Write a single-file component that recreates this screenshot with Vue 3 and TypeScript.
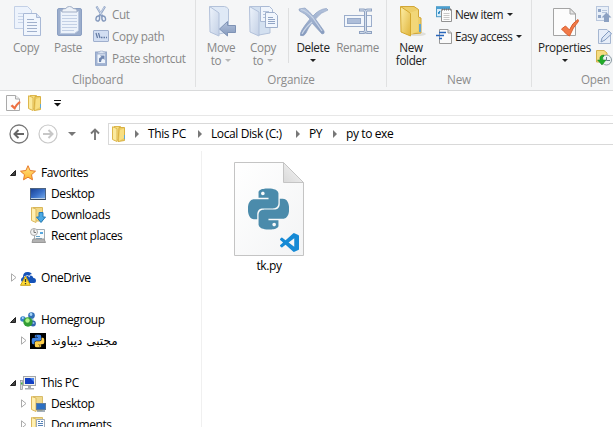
<script setup lang="ts">
interface Crumb { label: string; width: number }
interface TreeItem {
  label: string
  icon: string
  level: number
  state?: 'open' | 'closed'
  spacer?: boolean
  rtl?: boolean
}

const crumbs: Crumb[] = [
  { label: 'This PC', width: 63 },
  { label: 'Local Disk (C:)', width: 98 },
  { label: 'PY', width: 37 },
  { label: 'py to exe', width: 60 },
]

const tree: TreeItem[] = [
  { label: 'Favorites', icon: 'star', level: 0, state: 'open' },
  { label: 'Desktop', icon: 'desktop', level: 1 },
  { label: 'Downloads', icon: 'downloads', level: 1 },
  { label: 'Recent places', icon: 'recent', level: 1 },
  { label: 'OneDrive', icon: 'onedrive', level: 0, state: 'closed', spacer: true },
  { label: 'Homegroup', icon: 'homegroup', level: 0, state: 'open', spacer: true },
  { label: 'مجتبی دیباوند', icon: 'pyuser', level: 1, state: 'closed', rtl: true },
  { label: 'This PC', icon: 'thispc', level: 0, state: 'open', spacer: true },
  { label: 'Desktop', icon: 'folder-desktop', level: 1, state: 'closed' },
  { label: 'Documents', icon: 'folder-docs', level: 1, state: 'closed' },
]
</script>

<template>
  <div class="explorer">
    <svg class="sprite" aria-hidden="true">
      <defs>
        <linearGradient id="gBlue" x1="0" y1="0" x2="1" y2="1"><stop offset="0" stop-color="#eef4fc" /><stop offset="1" stop-color="#c3d0e5" /></linearGradient>
        <linearGradient id="gSteel" x1="0" y1="0" x2="0" y2="1"><stop offset="0" stop-color="#b3c2dc" /><stop offset="1" stop-color="#8499bc" /></linearGradient>
        <linearGradient id="gGold" x1="0" y1="0" x2="1" y2="1"><stop offset="0" stop-color="#fff0a8" /><stop offset="1" stop-color="#dfb43c" /></linearGradient>
        <linearGradient id="gStar" x1="0" y1="0" x2="0" y2="1"><stop offset="0" stop-color="#ffe487" /><stop offset="1" stop-color="#ffb52e" /></linearGradient>
        <linearGradient id="gScreen" x1="0" y1="0" x2="1" y2="1"><stop offset="0" stop-color="#183e91" /><stop offset=".5" stop-color="#396fc7" /><stop offset="1" stop-color="#7fb2ee" /></linearGradient>
        <linearGradient id="gPage" x1="0" y1="0" x2="1" y2="1"><stop offset="0" stop-color="#fff" /><stop offset="1" stop-color="#f3f4f5" /></linearGradient>
        <linearGradient id="gFold" x1="0" y1="1" x2="1" y2="0"><stop offset="0" stop-color="#d9d9d9" /><stop offset="1" stop-color="#f7f7f7" /></linearGradient>
      </defs>
      <symbol id="copy" viewBox="0 0 32 32">
        <path d="M4.500 1.500H17.500L21.500 5.500V23.500H4.500Z" fill="#edf3fc" stroke="#c3d0e6" />
        <path d="M8 8.500H13M8 11.500H13M8 14.500H13M8 17.500H13" stroke="#c9d5e9" />
        <path d="M13.500 8.500H26.500L30.500 12.500V30.500H13.500Z" fill="#f1f6fd" stroke="#a9b9d6" />
        <path d="M26.500 8.500V12.500H30.500" fill="#d5e0f1" stroke="#a9b9d6" />
        <path d="M17 14.500H24M17 17.500H27M17 20.500H27M17 23.500H27M17 26.500H27" stroke="#a0b0cc" />
      </symbol>
      <symbol id="paste" viewBox="0 0 32 32">
        <rect x="5.500" y="3.500" width="24" height="27" rx="1.500" fill="#9badcc" stroke="#8b9fc2" />
        <path d="M8.500 6.500H26.500V25.500L22.500 28.500H8.500Z" fill="#edf3fb" stroke="#bac8df" />
        <path d="M10 10.500H25M10 13.500H25M10 16.500H25M10 19.500H25M10 22.500H25M10 25.500H22" stroke="#c3d0e5" />
        <path d="M10 7V5Q11 3.500 14 3.500Q14.500 1.500 17.500 1.500T21 3.500Q24 3.500 25 5V7Z" fill="#eef2f8" stroke="#a3b0c7" />
      </symbol>
      <symbol id="cut" viewBox="0 0 16 16">
        <path d="M3.500 .5L9.800 11M12 .5L5.700 11" stroke="#93a6c6" stroke-width="2.200" fill="none" />
        <path d="M4 1L9 9M11.500 1L7 8" stroke="#dbe4f2" stroke-width=".7" />
        <path d="M6.500 10Q3.500 9.500 3 12.500T5.500 15Q7 14 6.500 10ZM9 10Q12 9.500 12.500 12.500T10 15Q8.500 14 9 10Z" fill="#edf2fa" stroke="#8297bb" stroke-width="1.400" />
      </symbol>
      <symbol id="path" viewBox="0 0 16 16">
        <rect x=".5" y="2.500" width="15" height="11" rx=".5" fill="#d2def2" stroke="#9fafcd" />
        <path d="M3 5L4.500 10M5.500 5L7 10" stroke="#6078a2" stroke-width="1.200" />
        <path d="M8 9.500H9.500M10.500 9.500H12M13 9.500H14" stroke="#6078a2" stroke-width="1.300" />
      </symbol>
      <symbol id="shortcut" viewBox="0 0 16 16">
        <rect x="2.600" y="2" width="10.800" height="13.300" fill="#a6b7d5" stroke="#8ea2c6" />
        <rect x="4.500" y="4.500" width="7.500" height="8.500" fill="#edf3fb" />
        <path d="M5 3.500V2H7V1H10V2H12V3.500Z" fill="#dce5f2" stroke="#a4b4cf" stroke-width=".6" />
        <path d="M6 12V8.500Q7 7 8.500 7L7 5.500H11.500V10L10 8.500Q8 9 8 12Z" fill="#6f86b0" />
      </symbol>
      <symbol id="move" viewBox="0 0 32 32">
        <path d="M5 1.500H19.500Q22 2 23.500 4V27L14 29Z" fill="#dfe9f6" stroke="#b3c2da" />
        <path d="M4.500 1.500L12 6.500L14 8V31L5 27Z" fill="url(#gBlue)" stroke="#b2c1da" />
        <path d="M14.500 24L22.500 16.500V20.500H30.500V27.500H22.500V31Z" fill="url(#gSteel)" stroke="#7f93b5" />
      </symbol>
      <symbol id="copyto" viewBox="0 0 32 32">
        <path d="M3 1.500H17L23 5V28L12 30Z" fill="#d3e0f0" stroke="#b3c2da" />
        <path d="M2.500 1.500L12 7V31L3 27Z" fill="url(#gBlue)" stroke="#b2c1da" />
        <path d="M13.500 1.500H22.500L25.500 4.500V16.500H13.500Z" fill="#f0f5fc" stroke="#aabad5" />
        <path d="M16 6.500H22M16 9.500H22M16 12.500H22" stroke="#b4c3dc" />
        <path d="M18.500 7.500H27.500L30.500 10.500V22.500H18.500Z" fill="#f1f6fd" stroke="#9eafcb" />
        <path d="M21 12.500H26M21 14.500H28M21 16.500H28M21 18.500H28" stroke="#92a5c5" />
      </symbol>
      <symbol id="delete" viewBox="0 0 32 32">
        <path d="M2 4L8 3Q12 6 16 11Q22 4 29.500 3.500L31 5Q24 7 18.500 14L27 26Q28 29 25 29L15 18Q11 23 9 28Q7 32 3.500 30.500Q2 27 13 14Q8 8 2.500 6Z" fill="url(#gSteel)" stroke="#8b9fc1" stroke-width=".7" />
        <path d="M4 4.500Q10 6 16 13L25 26M15 17Q8 23 5 29" fill="none" stroke="#c8d4e6" stroke-width="1.200" />
      </symbol>
      <symbol id="rename" viewBox="0 0 32 32">
        <rect x="2.500" y="10.500" width="27" height="11" fill="#f2f6fb" stroke="#9badcb" />
        <rect x="5.500" y="13.500" width="13" height="5" fill="#aebed9" stroke="#96a9c9" />
        <path d="M17 5H21.500Q23.500 5 23.500 7V25Q23.500 27.500 21.500 27.500H17M30 5H25.500Q23.500 5 23.500 7V25Q23.500 27.500 25.500 27.500H30" fill="none" stroke="#8fa2c1" stroke-width="3" />
        <path d="M18 5H21.500Q23.500 5 23.500 7V25Q23.500 27.500 21.500 27.500H18M29 5H25.500Q23.500 5 23.500 7M23.500 25Q23.500 27.500 25.500 27.500H29" fill="none" stroke="#d4deec" />
      </symbol>
      <symbol id="goldfolder" viewBox="0 0 32 32">
        <ellipse cx="22" cy="29" rx="9" ry="2" fill="#dfdfdb" />
        <path d="M6 1.500H19L23.500 4.500V12L26 13V28L16 29Z" fill="#edce69" stroke="#d1a637" />
        <path d="M14 8L23 5V26L15 30Z" fill="#f2d778" />
        <path d="M5.500 1.500L13 6.500L15.500 8.500V31L6 27Z" fill="url(#gGold)" stroke="#d4a82f" />
        <rect x="24" y="19" width="2" height="8" fill="#60a5ce" />
      </symbol>
      <symbol id="newitem" viewBox="0 0 16 16">
        <rect x=".5" y=".7" width="13" height="10" fill="#d7ecfa" stroke="#4b9cc7" />
        <path d="M1 1H13V3H1Z" fill="#4ba0d3" /><path d="M2 7L4 5L3 8Z" stroke="#308bc5" fill="none" />
        <path d="M5.500 3.500H15.500V15.500H5.500Z" fill="#fcfcfc" stroke="#929292" />
        <path d="M6 3.500H15" stroke="#777" stroke-dasharray="1 1" stroke-width="2" />
        <path d="M7.500 7.500H13.500M7.500 9.500H13.500M7.500 11.500H13.500M7.500 13.500H13.500" stroke="#c8c8c8" />
      </symbol>
      <symbol id="access" viewBox="0 0 16 16">
        <path d="M3.500 1.500H12L15.500 5V15.500H3.500Z" fill="#fafafa" stroke="#999" />
        <path d="M12 1.500V5H15.500" fill="#ddd" stroke="#999" />
        <path d="M3 4.500H10M0 7.500H8M3 10.500H6" stroke="#2866bb" stroke-width="1.300" />
      </symbol>
      <symbol id="properties" viewBox="0 0 32 32">
        <path d="M4.500 3.500H21L26.500 9V30.500H4.500Z" fill="#fcfcfc" stroke="#a4a4a4" />
        <path d="M21 3.500V9H26.500Z" fill="#e6e6e6" stroke="#a4a4a4" />
        <path d="M12.500 24L16.500 21L20.500 25Q23 18 29 14.500Q30 15 29 17Q24 22 20.500 31Q18 30 12.500 24Z" fill="#f17a48" stroke="#d95d2d" />
      </symbol>
      <symbol id="open" viewBox="0 0 16 16">
        <rect x=".5" y=".5" width="12" height="14" fill="#e8eff8" stroke="#b9c7dd" />
        <path d="M2 3H5V6H2ZM2 9H5V12H2Z" fill="#91a6c7" /><path d="M6 4.500H11M6 6.500H11" stroke="#b6c5dc" />
        <path d="M10.500 6.500L15.500 11.500H13V16H8V11.500H5.500Z" fill="#8ca1c2" />
      </symbol>
      <symbol id="edit" viewBox="0 0 16 16">
        <path d="M2.500 1.500H11L14.500 5V15.500H2.500Z" fill="#e7eef9" stroke="#a5b6d1" />
        <path d="M5 14L6 10L13 3L15.500 6L9 12Z" fill="#dce6f5" stroke="#829bc0" />
      </symbol>
      <symbol id="history" viewBox="0 0 16 16">
        <path d="M.5 .5H8L11 3V12H.5Z" fill="#f5dc82" stroke="#d4b14c" />
        <circle cx="10.500" cy="10" r="5" fill="#eef3f5" stroke="#8c9ba3" />
        <path d="M10.500 7V10.500H14" fill="none" stroke="#657b8a" />
        <path d="M8 5Q3 5 4 10H1.500L6 15L10 10H7Q6 7 8 6Z" fill="#20ad28" stroke="#128118" stroke-width=".5" />
      </symbol>
      <symbol id="smallprops" viewBox="0 0 16 16">
        <path d="M1.500 .5H10.500L14.500 4V15.500H1.500Z" fill="#fcfcfc" stroke="#aaa" />
        <path d="M10.500 .5V4H14.500" fill="#eee" stroke="#aaa" />
        <path d="M5.500 11L7.500 9.500L9.500 11.500Q12 7 15 6L15.500 8Q12 10 10 15Z" fill="#ed7041" />
      </symbol>
      <symbol id="folder" viewBox="0 0 16 16">
        <path d="M3 .5H9.500V14H3Z" fill="#f7df83" stroke="#ddb74d" />
        <path d="M8 1.500H13.500V14.500L7 15.500Z" fill="#eccb65" stroke="#d9b142" />
        <path d="M1.500 .8L6 2.500V15.500L1.500 13.500Z" fill="#fbea9e" stroke="#ddb74d" />
        <path d="M9 4L13 2.500V12L8 15Z" fill="#f8df82" /><path d="M13.500 9V13" stroke="#62a8d1" />
      </symbol>
      <symbol id="star" viewBox="0 0 16 16"><path d="M8 .7L10.100 5.500L15.500 6.200L11.500 9.700L12.500 14.800L8 12.200L3.500 14.800L4.500 9.700L.5 6.200L5.900 5.500Z" fill="url(#gStar)" stroke="#e7792b" /></symbol>
      <symbol id="desktop" viewBox="0 0 16 16"><rect x=".5" y="2.500" width="15" height="11" fill="url(#gScreen)" stroke="#4e6481" /><path d="M1 12.500H15" stroke="#bcd0e5" /><path d="M.5 13.500H15.500" stroke="#34465d" /></symbol>
      <symbol id="downloads" viewBox="0 0 16 16">
        <path d="M3 .5H12.500V14H3Z" fill="#f1d784" stroke="#d9b75a" /><path d="M1.500 .5L6 2V15.500L1.500 13.500Z" fill="#fff0b2" stroke="#dcb85d" />
        <path d="M9 5.500H13V10H15.500L11 15.500L6.500 10H9Z" fill="#4ca9e3" stroke="#247bb8" />
      </symbol>
      <symbol id="recent" viewBox="0 0 16 16">
        <path d="M4.500 1.500H14.500V12H4.500Z" fill="#f7fbfd" stroke="#a3acb2" /><path d="M10 4H13V6H10Z" fill="#57a7df" /><path d="M6 8.500H10M6 10.500H12" stroke="#66a2c7" />
        <circle cx="4" cy="4" r="3.500" fill="#f2f2f2" stroke="#aaa" /><path d="M4 1.500V4.500H6" fill="none" stroke="#777" />
        <path d="M3 11H14L15.500 14.500H2Z" fill="#b3b3b3" stroke="#999" />
      </symbol>
      <symbol id="onedrive" viewBox="0 0 16 16">
        <path d="M2 12Q-.5 9 3 7Q3 2 7.500 2Q10 1.500 12 4Q10 4 9 6Q12 4.500 13.500 8Q16 8 16 11Q16 13 14 13H7Z" fill="#1552b7" />
        <path d="M4 7Q8 4 10 7" fill="none" stroke="#fff" stroke-width=".9" />
        <path d="M5.500 6.300L10.500 15.300H.5Z" fill="#ffdc35" stroke="#c9a218" /><path d="M5.500 9V12M5.500 13V14.200" stroke="#333" stroke-width="1.300" />
      </symbol>
      <symbol id="homegroup" viewBox="0 0 16 16">
        <path d="M3 7L8 10L12 4L13 12L7 13Z" fill="none" stroke="#9cc6dc" stroke-width="2" />
        <circle cx="3" cy="7" r="2.800" fill="#3683c8" /><circle cx="11.500" cy="3.500" r="3.300" fill="#326fb8" /><circle cx="13" cy="11.500" r="2.900" fill="#3267ae" /><circle cx="8" cy="10" r="4.700" fill="#329d35" />
        <circle cx="7.500" cy="8.500" r="2.200" fill="#adf286" /><circle cx="11" cy="2.500" r="1.400" fill="#a9d8f7" /><circle cx="2.800" cy="6" r="1" fill="#b2dcfa" /><circle cx="13.500" cy="11" r="1" fill="#8dbde9" />
      </symbol>
      <symbol id="pytop" viewBox="0 0 24 24"><path d="M14.250.180l.9.2.73.26.59.3.45.32.34.34.25.34.16.33.1.3.04.26.02.2-.01.13V8.500l-.05.63-.13.55-.21.46-.26.38-.3.31-.33.25-.35.19-.35.14-.33.1-.3.07-.26.04-.21.02H8.770l-.69.05-.59.14-.5.22-.41.27-.33.32-.27.35-.2.36-.15.37-.1.35-.07.32-.04.27-.02.21v3.060H3.170l-.21-.03-.28-.07-.32-.12-.35-.18-.36-.26-.36-.36-.35-.46-.32-.59-.28-.73-.21-.88-.14-1.050-.05-1.230.06-1.220.16-1.040.24-.87.32-.71.36-.57.4-.44.42-.33.42-.24.4-.16.36-.1.32-.05.24-.01h.16l.06.01h8.160v-.83H6.180l-.01-2.750-.02-.37.05-.34.11-.31.17-.28.25-.26.31-.23.38-.2.44-.18.51-.15.58-.12.64-.1.71-.06.77-.04.84-.02 1.270.05zm-6.300 1.980l-.23.33-.08.41.08.41.23.34.33.22.41.09.41-.09.33-.22.23-.34.08-.41-.08-.41-.23-.33-.33-.22-.41-.09-.41.09z" /></symbol>
      <symbol id="pybottom" viewBox="0 0 24 24"><path d="M21.040 6.110l.28.06.32.12.35.18.36.27.36.35.35.47.32.59.28.73.21.88.14 1.040.05 1.230-.06 1.230-.16 1.040-.24.86-.32.71-.36.57-.4.45-.42.33-.42.24-.4.16-.36.09-.32.05-.24.02-.16-.01h-8.220v.82h5.840l.01 2.760.02.36-.05.34-.11.31-.17.29-.25.25-.31.24-.38.2-.44.17-.51.15-.58.13-.64.09-.71.07-.77.04-.84.01-1.270-.04-1.070-.14-.9-.2-.73-.25-.59-.3-.45-.33-.34-.34-.25-.34-.16-.33-.1-.3-.04-.25-.02-.2.01-.13v-5.340l.05-.64.13-.54.21-.46.26-.38.3-.32.33-.24.35-.2.35-.14.33-.1.3-.06.26-.04.21-.02.13-.01h5.840l.69-.05.59-.14.5-.21.41-.28.33-.32.27-.35.2-.36.15-.36.1-.35.07-.32.04-.28.02-.21V6.070h2.090l.14.01zm-6.470 14.250l-.23.33-.08.41.08.41.23.33.33.23.41.08.41-.08.33-.23.23-.33.08-.41-.08-.41-.23-.33-.33-.23-.41-.08-.41.08z" /></symbol>
      <symbol id="pyuser" viewBox="0 0 16 16"><rect width="16" height="16" fill="#000" /><use href="#pytop" x="1.500" y="1.500" width="13" height="13" fill="#3f84e4" /><use href="#pybottom" x="1.500" y="1.500" width="13" height="13" fill="#ffd04b" /></symbol>
      <symbol id="thispc" viewBox="0 0 16 16">
        <rect x="3.500" y="1.500" width="12" height="9" fill="#f1f1eb" stroke="#a3a6a9" /><rect x="5" y="3" width="9" height="6" fill="#123fc3" /><path d="M10 3H14V7Z" fill="#4d86ed" />
        <path d="M8 11H11V13H14V14.500H5V13H8Z" fill="#a6abb0" /><rect x=".5" y="5.500" width="2" height="9" fill="#ddd" stroke="#8a9296" stroke-width=".7" /><path d="M1 8.500H2.500" stroke="#43b543" stroke-width="2" />
      </symbol>
      <symbol id="folder-desktop" viewBox="0 0 16 16">
        <path d="M3 .5H12.500V14H3Z" fill="#efd98c" stroke="#d9bc69" /><path d="M1.500 .5L6 2V15.500L1.500 13.500Z" fill="#fff0b2" stroke="#dcb85d" />
        <rect x="6.500" y="7.500" width="9" height="6" fill="#2d70c2" stroke="#607d9d" /><path d="M7 15H15" stroke="#486077" />
      </symbol>
      <symbol id="folder-docs" viewBox="0 0 16 16">
        <path d="M3 .5H12.500V14H3Z" fill="#efd98c" stroke="#d9bc69" /><path d="M1.500 .5L6 2V15.500L1.500 13.500Z" fill="#fff0b2" stroke="#dcb85d" />
        <path d="M6.500 2.500H14.500V13.500H6.500Z" fill="#fcfdff" stroke="#9eabb8" /><path d="M8 4.500H10M11 4.500H13M8 6.500H13M8 8.500H13" stroke="#5682b5" />
      </symbol>
      <symbol id="vscode" viewBox="0 0 24 24"><path d="M23.150 2.587L18.210.210a1.494 1.494 0 0 0-1.705.290l-9.460 8.630-4.120-3.128a.999.999 0 0 0-1.276.057L.327 7.261A1 1 0 0 0 .326 8.740L3.899 12 .326 15.260a1 1 0 0 0 .001 1.479L1.650 17.940a.999.999 0 0 0 1.276.057l4.120-3.128 9.460 8.630a1.492 1.492 0 0 0 1.704.290l4.942-2.377A1.500 1.500 0 0 0 24 20.060V3.939a1.500 1.500 0 0 0-.85-1.352zm-5.146 14.861L10.826 12l7.178-5.448v10.896z" /></symbol>
    </svg>

    <header class="ribbon">
      <section class="group clipboard">
        <div class="tools">
          <button class="big disabled"><svg><use href="#copy" /></svg><span>Copy</span></button>
          <button class="big disabled"><svg><use href="#paste" /></svg><span>Paste</span></button>
          <div class="stack">
            <button class="small disabled"><svg><use href="#cut" /></svg>Cut</button>
            <button class="small disabled"><svg><use href="#path" /></svg>Copy path</button>
            <button class="small disabled"><svg><use href="#shortcut" /></svg>Paste shortcut</button>
          </div>
        </div>
        <div class="caption">Clipboard</div>
      </section>
      <section class="group organize">
        <div class="tools">
          <button class="big disabled"><svg><use href="#move" /></svg><span>Move</span><span>to <i class="caret" /></span></button>
          <button class="big disabled"><svg><use href="#copyto" /></svg><span>Copy</span><span>to <i class="caret" /></span></button>
          <div class="divider" />
          <button class="big delete"><svg><use href="#delete" /></svg><span>Delete</span><span><i class="caret" /></span></button>
          <button class="big disabled rename"><svg><use href="#rename" /></svg><span>Rename</span></button>
        </div>
        <div class="caption">Organize</div>
      </section>
      <section class="group new">
        <div class="tools">
          <button class="big"><svg><use href="#goldfolder" /></svg><span>New</span><span>folder</span></button>
          <div class="stack">
            <button class="small"><svg><use href="#newitem" /></svg>New item <i class="caret" /></button>
            <button class="small"><svg><use href="#access" /></svg>Easy access <i class="caret" /></button>
          </div>
        </div>
        <div class="caption">New</div>
      </section>
      <section class="group open">
        <div class="tools">
          <button class="big properties"><svg><use href="#properties" /></svg><span>Properties</span><span><i class="caret" /></span></button>
          <div class="stack">
            <button class="small"><svg><use href="#open" /></svg></button>
            <button class="small"><svg><use href="#edit" /></svg></button>
            <button class="small"><svg><use href="#history" /></svg></button>
          </div>
        </div>
        <div class="caption">Open</div>
      </section>
    </header>

    <div class="quick">
      <svg class="i16"><use href="#smallprops" /></svg>
      <svg class="i16"><use href="#folder" /></svg>
      <svg class="customize" viewBox="0 0 7 7"><path d="M0 .5H7" stroke="#111" /><path d="M0 3H7L3.500 6.500Z" fill="#111" /></svg>
    </div>

    <nav class="address">
      <svg class="round" viewBox="0 0 20 20"><circle cx="10" cy="10" r="9" fill="#fff" stroke="#777" stroke-width="1.300" /><path d="M15 10H6M9.500 6L5.500 10L9.500 14" fill="none" stroke="#666" stroke-width="2" /></svg>
      <svg class="round" viewBox="0 0 20 20"><circle cx="10" cy="10" r="9" fill="#fff" stroke="#c9c9c9" stroke-width="1.200" /><path d="M5 10H14M10.500 6L14.500 10L10.500 14" fill="none" stroke="#c7c7c7" stroke-width="2" /></svg>
      <i class="caret recent-caret" />
      <svg class="up" viewBox="0 0 10 12"><path d="M5 12V2M1 5.500L5 1.500L9 5.500" fill="none" stroke="#777" stroke-width="1.900" /></svg>
      <div class="field">
        <svg class="i16"><use href="#folder" /></svg>
        <div v-for="crumb in crumbs" :key="crumb.label" class="crumb" :style="{ width: crumb.width + 'px' }">
          <svg class="chevron" viewBox="0 0 4 8"><path d="M0 0L4 4L0 8Z" fill="#777" /></svg>{{ crumb.label }}
        </div>
      </div>
    </nav>

    <main class="body">
      <aside class="sidebar">
        <div v-for="(item, index) in tree" :key="index" class="node" :class="['level' + item.level, { spacer: item.spacer }]">
          <span class="twist">
            <svg v-if="item.state === 'open'" viewBox="0 0 6 6"><path d="M5.500 .5V5.500H.5Z" fill="#444" stroke="#222" /></svg>
            <svg v-else-if="item.state === 'closed'" class="closed" viewBox="0 0 6 9"><path d="M.5 .8L5 4.500L.5 8.200Z" fill="#fff" stroke="#aaa" /></svg>
          </span>
          <svg class="i16"><use :href="'#' + item.icon" /></svg>
          <span class="label" :class="{ persian: item.rtl }" :dir="item.rtl ? 'rtl' : 'ltr'">{{ item.label }}</span>
        </div>
      </aside>
      <section class="files">
        <figure class="file">
          <svg class="page" viewBox="0 0 70 94">
            <path d="M.5 .5H49.500L69.500 20.500V93.500H.5Z" fill="url(#gPage)" stroke="#c4c4c4" />
            <path d="M49.500 .5V20.500H69.500Z" fill="url(#gFold)" stroke="#c4c4c4" />
            <g fill="#4b8bab"><use href="#pytop" x="14" y="26" width="41" height="42" /><use href="#pybottom" x="14" y="26" width="41" height="42" /></g>
            <use href="#vscode" x="46" y="71" width="19" height="19" fill="#168ad5" />
          </svg>
          <figcaption>tk.py</figcaption>
        </figure>
      </section>
    </main>
  </div>
</template>

<style>
body { margin: 0; overflow: hidden; background: #fff; }
</style>

<style scoped>
.explorer { width: 613px; height: 427px; overflow: hidden; display: flex; flex-direction: column; background: #fff; color: #000; font: 12px/14px "Open Sans", "Noto Sans", sans-serif; letter-spacing: -.4px; }
svg { display: block; flex: none; }
.sprite { position: absolute; width: 0; height: 0; }
button { border: 0; padding: 0; background: none; font: inherit; letter-spacing: inherit; color: #222; }
.ribbon { height: 90px; display: flex; flex: none; background: #f5f6f7; border-bottom: 1px solid #d9dadb; overflow: hidden; font-size: 11.7px; letter-spacing: -.35px; }
.group { display: flex; flex: none; flex-direction: column; box-sizing: border-box; height: 87px; border-right: 1px solid #e0e1e2; }
.clipboard { width: 196px; }
.organize { width: 191px; }
.new { width: 145px; }
.open { width: 128px; }
.tools { height: 73px; display: flex; box-sizing: border-box; padding: 5px 0 0 5px; }
.organize .tools { padding-left: 4px; }
.new .tools, .open .tools { padding-left: 3px; }
.caption { color: #8c8c8c; text-align: center; padding-top: 1px; line-height: 16px; letter-spacing: -.2px; }
.big { width: 42px; display: flex; flex-direction: column; align-items: center; white-space: nowrap; line-height: 13px; }
.big svg { width: 32px; height: 32px; margin-bottom: 4px; }
.big span { display: flex; align-items: center; height: 13px; gap: 4px; }
.disabled { color: #888; }
.caret { display: inline-block; border: 3px solid transparent; border-top-color: #222; border-bottom: 0; width: 0; height: 0; }
.disabled .caret { border-top-color: #b8b8b8; }
.divider { width: 1px; height: 55px; margin: 3px 3px 0 4px; background: #dedfe0; }
.delete { width: 42px; }
.rename { width: 47px; }
.properties { width: 59px; }
.stack { margin: -2px 0 0 4px; }
.open .stack { margin-left: 2px; }
.small { height: 22px; display: flex; align-items: center; gap: 3px; white-space: nowrap; }
.small svg { width: 16px; height: 16px; }
.small .caret { margin-left: 1px; }
.new .small { letter-spacing: -.5px; }
.quick { height: 24px; flex: none; display: flex; align-items: center; padding-left: 5px; gap: 6px; border-bottom: 1px solid #e7e7e7; }
.i16 { width: 16px; height: 16px; }
.customize { width: 7px; height: 7px; margin-left: 5px; margin-top: 1px; }
.address { height: 35px; flex: none; display: flex; align-items: center; padding-left: 9px; }
.round { width: 20px; height: 20px; }
.round + .round { margin-left: 9px; }
.recent-caret { border-width: 4px 4px 0; border-top-color: #777; margin-left: 10px; }
.up { width: 10px; height: 12px; margin-left: 14px; }
.field { display: flex; align-items: center; box-sizing: border-box; height: 22px; width: 530px; margin-left: 8px; border: 1px solid #d9d9d9; border-right: 0; padding-left: 2px; }
.crumb { display: flex; align-items: center; white-space: nowrap; flex: none; }
.chevron { width: 4px; height: 8px; margin: 0 9px 0 8px; }
.body { flex: 1; display: flex; min-height: 0; }
.sidebar { width: 201px; flex: none; padding-top: 11px; border-right: 1px solid #f0f0f0; overflow: hidden; }
.node { height: 21px; display: flex; align-items: center; padding-left: 10px; }
.node.level1 { padding-left: 20px; }
.node.spacer { margin-top: 21px; }
.twist { width: 10px; flex: none; }
.twist svg { width: 6px; height: 6px; }
.twist .closed { height: 9px; margin-left: 1px; }
.label { margin-left: 5px; white-space: nowrap; }
.persian { font: 12px/14px "DejaVu Sans", sans-serif; letter-spacing: 0; }
.files { padding: 11px 0 0 32px; }
.file { margin: 0; width: 70px; }
.page { width: 70px; height: 94px; }
figcaption { text-align: center; margin-top: 3px; }
</style>
